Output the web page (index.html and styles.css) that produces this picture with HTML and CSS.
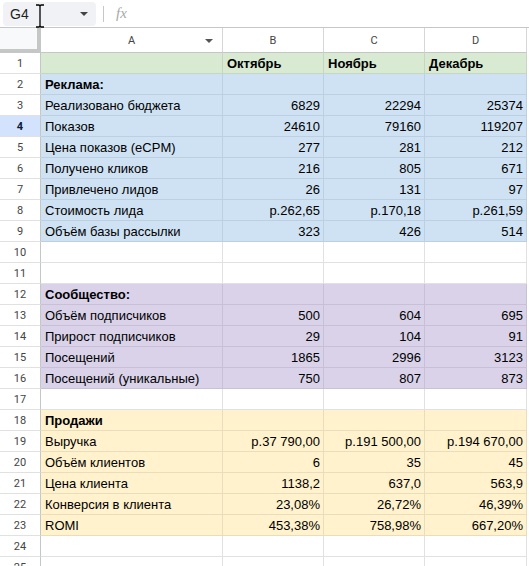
FILE: index.html
```html
<!DOCTYPE html>
<html lang="ru">
<head>
<meta charset="utf-8">
<link rel="stylesheet" href="styles.css">
</head>
<body>
<div class="toolbar">
  <div class="namebox"><span class="ref">G4</span><span class="caret"></span></div>
  <div class="sep"></div>
  <span class="fx">fx</span>
  <svg class="ibeam" width="10" height="24" viewBox="0 0 10 24"><path d="M1 1h3l1 1l1-1h3M5 2v20M1 23h3l1-1l1 1h3" fill="none" stroke="#000" stroke-width="1.3"/></svg>
</div>
<div class="sheet">
  <div class="corner"></div><div class="ch">A<span class="fdrop"></span></div><div class="ch">B</div><div class="ch">C</div><div class="ch">D</div>

  <div class="rh">1</div><div class="c g"></div><div class="c g b">Октябрь</div><div class="c g b">Ноябрь</div><div class="c g b">Декабрь</div>
  <div class="rh">2</div><div class="c bl b">Реклама:</div><div class="c bl"></div><div class="c bl"></div><div class="c bl"></div>
  <div class="rh">3</div><div class="c bl">Реализовано бюджета</div><div class="c bl n">6829</div><div class="c bl n">22294</div><div class="c bl n">25374</div>
  <div class="rh sel">4</div><div class="c bl">Показов</div><div class="c bl n">24610</div><div class="c bl n">79160</div><div class="c bl n">119207</div>
  <div class="rh">5</div><div class="c bl">Цена показов (eCPM)</div><div class="c bl n">277</div><div class="c bl n">281</div><div class="c bl n">212</div>
  <div class="rh">6</div><div class="c bl">Получено кликов</div><div class="c bl n">216</div><div class="c bl n">805</div><div class="c bl n">671</div>
  <div class="rh">7</div><div class="c bl">Привлечено лидов</div><div class="c bl n">26</div><div class="c bl n">131</div><div class="c bl n">97</div>
  <div class="rh">8</div><div class="c bl">Стоимость лида</div><div class="c bl n">р.262,65</div><div class="c bl n">р.170,18</div><div class="c bl n">р.261,59</div>
  <div class="rh">9</div><div class="c bl">Объём базы рассылки</div><div class="c bl n">323</div><div class="c bl n">426</div><div class="c bl n">514</div>
  <div class="rh">10</div><div class="c"></div><div class="c"></div><div class="c"></div><div class="c"></div>
  <div class="rh">11</div><div class="c"></div><div class="c"></div><div class="c"></div><div class="c"></div>
  <div class="rh">12</div><div class="c pu b">Сообщество:</div><div class="c pu"></div><div class="c pu"></div><div class="c pu"></div>
  <div class="rh">13</div><div class="c pu">Объём подписчиков</div><div class="c pu n">500</div><div class="c pu n">604</div><div class="c pu n">695</div>
  <div class="rh">14</div><div class="c pu">Прирост подписчиков</div><div class="c pu n">29</div><div class="c pu n">104</div><div class="c pu n">91</div>
  <div class="rh">15</div><div class="c pu">Посещений</div><div class="c pu n">1865</div><div class="c pu n">2996</div><div class="c pu n">3123</div>
  <div class="rh">16</div><div class="c pu">Посещений (уникальные)</div><div class="c pu n">750</div><div class="c pu n">807</div><div class="c pu n">873</div>
  <div class="rh">17</div><div class="c"></div><div class="c"></div><div class="c"></div><div class="c"></div>
  <div class="rh">18</div><div class="c ye b">Продажи</div><div class="c ye"></div><div class="c ye"></div><div class="c ye"></div>
  <div class="rh">19</div><div class="c ye">Выручка</div><div class="c ye n">р.37 790,00</div><div class="c ye n">р.191 500,00</div><div class="c ye n">р.194 670,00</div>
  <div class="rh">20</div><div class="c ye">Объём клиентов</div><div class="c ye n">6</div><div class="c ye n">35</div><div class="c ye n">45</div>
  <div class="rh">21</div><div class="c ye">Цена клиента</div><div class="c ye n">1138,2</div><div class="c ye n">637,0</div><div class="c ye n">563,9</div>
  <div class="rh">22</div><div class="c ye">Конверсия в клиента</div><div class="c ye n">23,08%</div><div class="c ye n">26,72%</div><div class="c ye n">46,39%</div>
  <div class="rh">23</div><div class="c ye">ROMI</div><div class="c ye n">453,38%</div><div class="c ye n">758,98%</div><div class="c ye n">667,20%</div>
  <div class="rh">24</div><div class="c"></div><div class="c"></div><div class="c"></div><div class="c"></div>
  <div class="rh">25</div><div class="c"></div><div class="c"></div><div class="c"></div><div class="c"></div>
</div>
</body>
</html>
```
FILE: styles.css
```css
* { box-sizing: border-box; }
html, body { margin: 0; padding: 0; background: #fff; overflow: hidden; }
body { font-family: "Liberation Sans", Arial, sans-serif; color: #000; width: 529px; height: 566px; }

.toolbar {
  position: relative;
  height: 28px;
  display: flex;
  align-items: center;
  border-bottom: 1px solid #c7c7c7;
  padding-left: 3px;
}
.namebox {
  width: 93px;
  height: 24px;
  background: #f0f2f5;
  border-radius: 4px;
  display: flex;
  align-items: center;
  justify-content: space-between;
  padding: 0 8px 0 7px;
}
.ref { font-size: 14px; color: #1f1f1f; }
.caret {
  width: 0; height: 0;
  border-left: 4px solid transparent;
  border-right: 4px solid transparent;
  border-top: 4px solid #444;
}
.sep { width: 1px; height: 16px; background: #c7c7c7; margin-left: 7px; }
.fx {
  margin-left: 12px;
  font-family: "Liberation Serif", serif;
  font-style: italic;
  font-size: 15px;
  color: #a8a8a8;
}
.ibeam { position: absolute; left: 35px; top: 4px; }

.sheet {
  display: grid;
  grid-template-columns: 41px 182px 101px 101px 102px;
  grid-template-rows: 25px;
  grid-auto-rows: 21px;
}
.corner {
  background: #f8f9fa;
  border-right: 4px solid #c4c7c5;
  border-bottom: 4px solid #c4c7c5;
}
.ch {
  position: relative;
  display: flex;
  align-items: center;
  justify-content: center;
  font-size: 11px;
  color: #444;
  background: #fff;
  border-right: 1px solid #d6d6d6;
  border-bottom: 1px solid #c4c7c5;
  font-family: Roboto, "Liberation Sans", sans-serif;
}
.fdrop {
  position: absolute;
  right: 9px;
  top: 11px;
  width: 0; height: 0;
  border-left: 4px solid transparent;
  border-right: 4px solid transparent;
  border-top: 4px solid #555;
}
.rh {
  display: flex;
  align-items: center;
  justify-content: center;
  font-size: 11px;
  color: #444;
  background: #fff;
  border-right: 1px solid #c4c7c5;
  border-bottom: 1px solid #e1e1e1;
  font-family: Roboto, "Liberation Sans", sans-serif;
  padding-top: 1px;
}
.rh.sel { background: #d3e3fd; color: #0b1a3c; font-weight: bold; }
.c {
  font-size: 13px;
  line-height: 20px;
  padding: 1px 4px 0 4px;
  white-space: nowrap;
  overflow: hidden;
  border-right: 1px solid #e1e1e1;
  border-bottom: 1px solid #e1e1e1;
}
.n { text-align: right; padding-right: 3px; }
.b { font-weight: bold; }
.g { background: #d9ead3; border-color: #c6d6c0; }
.bl { background: #cfe2f3; border-color: #bcd0e2; }
.pu { background: #d9d2e9; border-color: #c7c0d6; }
.ye { background: #fff2cc; border-color: #e9ddbb; }
```
